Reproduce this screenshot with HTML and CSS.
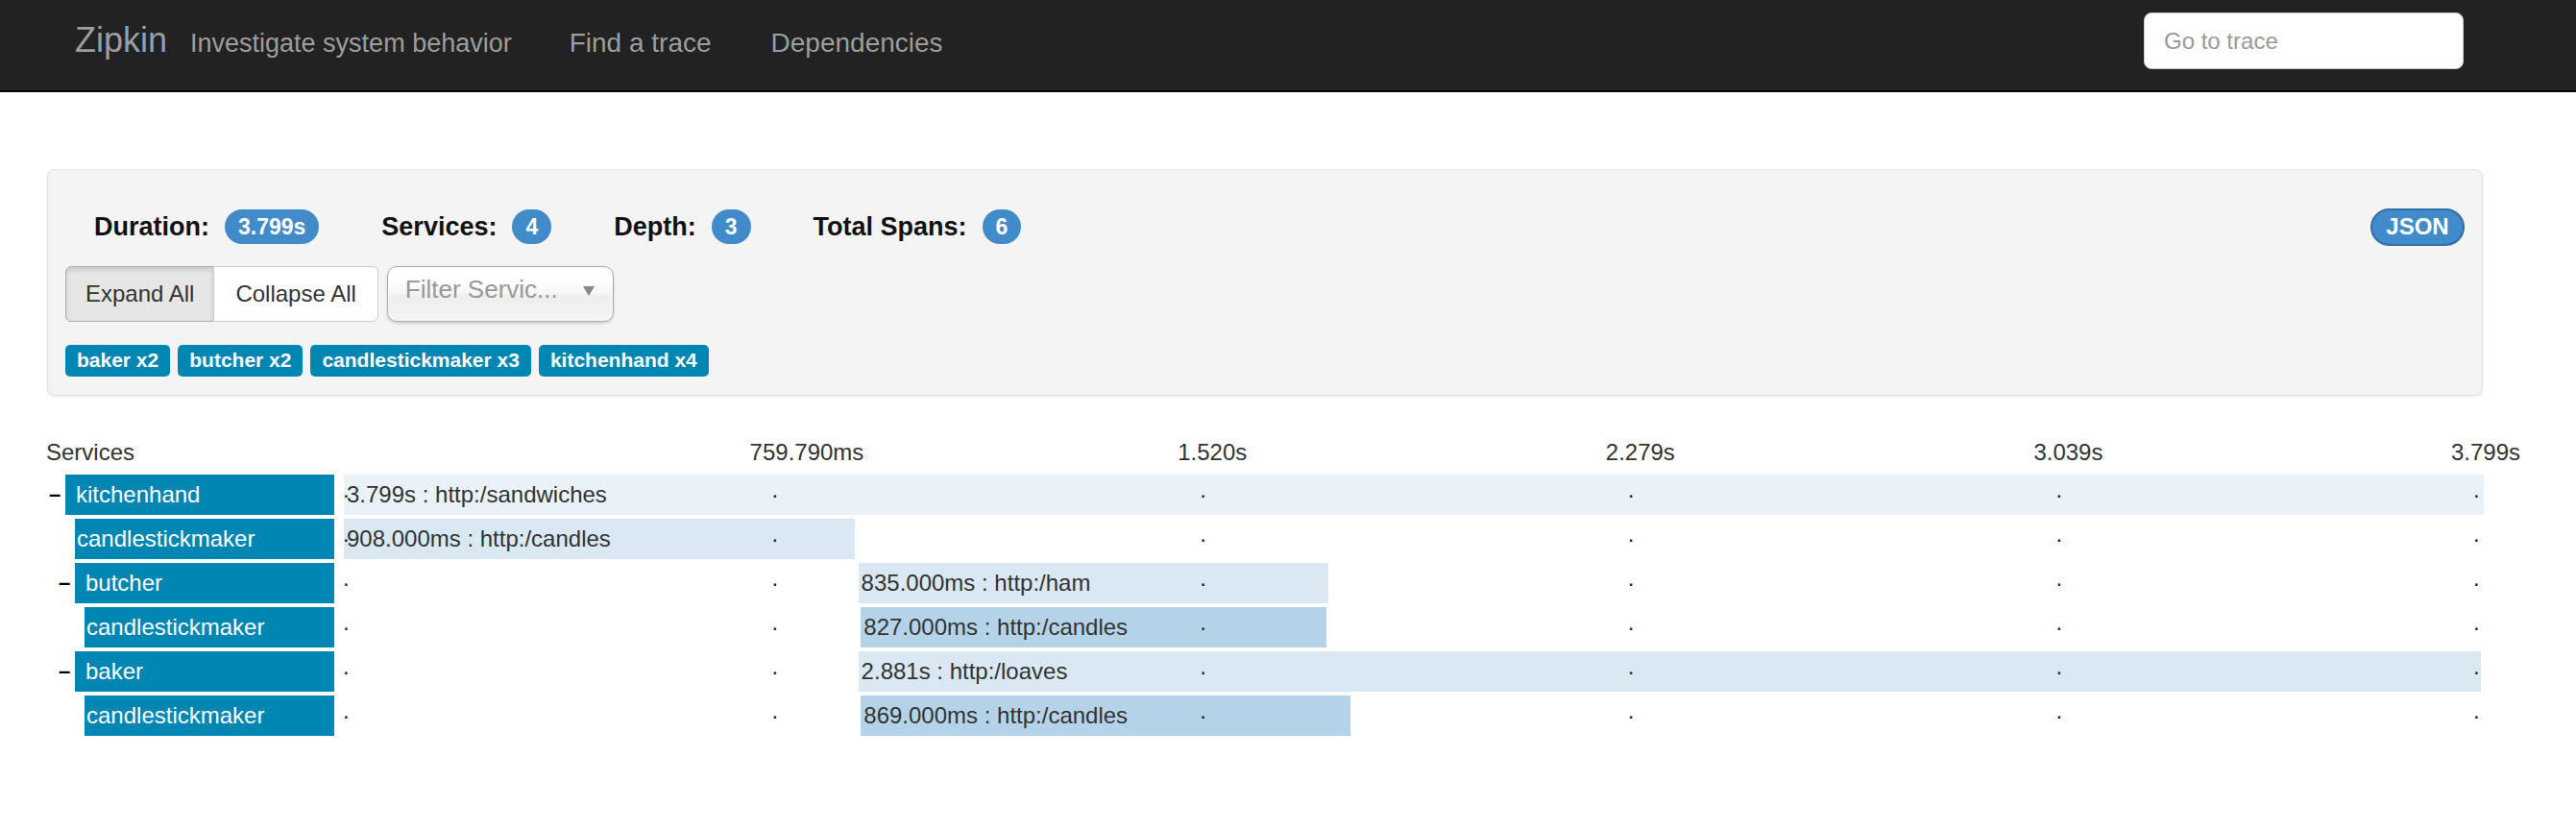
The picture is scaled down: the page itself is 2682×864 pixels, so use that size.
FILE: index.html
```html
<!DOCTYPE html>
<html lang="en">
<head>
<meta charset="utf-8">
<title>Zipkin - Trace</title>
<link rel="stylesheet" href="styles.css">
</head>
<body>
<nav class="navbar">
  <div class="nav-left">
    <a class="brand" href="#">Zipkin</a>
    <span class="tagline">Investigate system behavior</span>
    <ul class="nav-links">
      <li><a href="#">Find a trace</a></li>
      <li><a href="#">Dependencies</a></li>
    </ul>
  </div>
  <input class="trace-input" type="text" placeholder="Go to trace">
</nav>

<main class="content">
  <section class="summary-panel">
    <div class="summary-top">
      <div class="stats">
        <div class="stat"><strong>Duration:</strong><span class="badge">3.799s</span></div>
        <div class="stat"><strong>Services:</strong><span class="badge">4</span></div>
        <div class="stat"><strong>Depth:</strong><span class="badge">3</span></div>
        <div class="stat"><strong>Total Spans:</strong><span class="badge">6</span></div>
      </div>
      <button class="json-btn">JSON</button>
    </div>
    <div class="controls">
      <div class="btn-group">
        <button class="btn active">Expand All</button>
        <button class="btn">Collapse All</button>
      </div>
      <div class="filter-select">
        <span class="filter-text">Filter Servic...</span>
        <span class="caret"></span>
      </div>
    </div>
    <div class="service-tags">
      <span class="tag">baker x2</span>
      <span class="tag">butcher x2</span>
      <span class="tag">candlestickmaker x3</span>
      <span class="tag">kitchenhand x4</span>
    </div>
  </section>

  <section class="trace">
    <div class="trace-header">
      <div class="services-title">Services</div>
      <div class="axis">
        <span class="tick-label l1">759.790ms</span>
        <span class="tick-label l2">1.520s</span>
        <span class="tick-label l3">2.279s</span>
        <span class="tick-label l4">3.039s</span>
        <span class="tick-label l5">3.799s</span>
      </div>
    </div>

    <div class="span-row">
      <div class="svc-cell d1"><span class="expander">–</span><div class="svc-name parent">kitchenhand</div></div>
      <div class="timeline">
        <div class="bar depth1" style="left:0%;width:100%">3.799s : http:/sandwiches</div>
        <span class="dot k0">.</span><span class="dot k1">.</span><span class="dot k2">.</span><span class="dot k3">.</span><span class="dot k4">.</span><span class="dot k5">.</span>
      </div>
    </div>

    <div class="span-row">
      <div class="svc-cell d2-leaf"><div class="svc-name">candlestickmaker</div></div>
      <div class="timeline">
        <div class="bar depth2" style="left:0%;width:23.90%">908.000ms : http:/candles</div>
        <span class="dot k0">.</span><span class="dot k1">.</span><span class="dot k2">.</span><span class="dot k3">.</span><span class="dot k4">.</span><span class="dot k5">.</span>
      </div>
    </div>

    <div class="span-row">
      <div class="svc-cell d2"><span class="expander">–</span><div class="svc-name parent">butcher</div></div>
      <div class="timeline">
        <div class="bar depth2" style="left:24.04%;width:21.98%">835.000ms : http:/ham</div>
        <span class="dot k0">.</span><span class="dot k1">.</span><span class="dot k2">.</span><span class="dot k3">.</span><span class="dot k4">.</span><span class="dot k5">.</span>
      </div>
    </div>

    <div class="span-row">
      <div class="svc-cell d3-leaf"><div class="svc-name">candlestickmaker</div></div>
      <div class="timeline">
        <div class="bar depth3" style="left:24.16%;width:21.77%">827.000ms : http:/candles</div>
        <span class="dot k0">.</span><span class="dot k1">.</span><span class="dot k2">.</span><span class="dot k3">.</span><span class="dot k4">.</span><span class="dot k5">.</span>
      </div>
    </div>

    <div class="span-row">
      <div class="svc-cell d2"><span class="expander">–</span><div class="svc-name parent">baker</div></div>
      <div class="timeline">
        <div class="bar depth2" style="left:24.04%;width:75.84%">2.881s : http:/loaves</div>
        <span class="dot k0">.</span><span class="dot k1">.</span><span class="dot k2">.</span><span class="dot k3">.</span><span class="dot k4">.</span><span class="dot k5">.</span>
      </div>
    </div>

    <div class="span-row">
      <div class="svc-cell d3-leaf"><div class="svc-name">candlestickmaker</div></div>
      <div class="timeline">
        <div class="bar depth3" style="left:24.16%;width:22.87%">869.000ms : http:/candles</div>
        <span class="dot k0">.</span><span class="dot k1">.</span><span class="dot k2">.</span><span class="dot k3">.</span><span class="dot k4">.</span><span class="dot k5">.</span>
      </div>
    </div>
  </section>
</main>
</body>
</html>
```

FILE: styles.css
```css
* {
  box-sizing: border-box;
}

body {
  margin: 0;
  font-family: "Liberation Sans", Arial, sans-serif;
  color: #333;
  background: #fff;
}

/* ---------- navbar ---------- */
.navbar {
  display: flex;
  justify-content: space-between;
  align-items: flex-start;
  height: 96px;
  background: #222;
  border-bottom: 2px solid #080808;
}

.nav-left {
  display: flex;
  align-items: baseline;
  padding: 24px 0 0 78px;
}

.brand {
  font-size: 36px;
  line-height: 36px;
  color: #9d9d9d;
  text-decoration: none;
  margin-right: 24px;
}

.tagline {
  font-size: 27px;
  color: #9d9d9d;
  margin-right: 30px;
}

.nav-links {
  display: flex;
  list-style: none;
  margin: 0;
  padding: 0;
}

.nav-links li {
  padding: 0 30px;
  font-size: 28px;
}

.nav-links li:last-child {
  padding-left: 32px;
}

.nav-links a {
  color: #9d9d9d;
  text-decoration: none;
}

.trace-input {
  margin: 13px 117px 0 0;
  width: 333px;
  height: 59px;
  border: 1px solid #ccc;
  border-radius: 8px;
  padding: 0 20px;
  font-family: "Liberation Sans", Arial, sans-serif;
  font-size: 24px;
  color: #555;
  background: #fff;
}

.trace-input::placeholder {
  color: #999;
}

/* ---------- content ---------- */
.content {
  padding: 80px 96px 40px 48px;
}

.summary-panel {
  margin: 0 1px;
  background: #f4f4f4;
  border: 1px solid #e3e3e3;
  border-radius: 8px;
  padding: 18px 18px 19px;
  box-shadow: 0 1px 3px rgba(0, 0, 0, 0.08);
}

.summary-top {
  display: flex;
  justify-content: space-between;
  align-items: center;
  height: 40px;
  margin-top: 21px;
}

.stats {
  display: flex;
  align-items: center;
  gap: 65px;
  padding-left: 30px;
}

.stat {
  display: flex;
  align-items: center;
  gap: 16px;
  font-size: 27px;
  color: #111;
}

.badge {
  display: inline-block;
  background: #428bca;
  color: #fff;
  font-size: 23px;
  font-weight: bold;
  line-height: 24px;
  padding: 6px 14px;
  border-radius: 18px;
}

.json-btn {
  width: 98px;
  height: 39px;
  padding: 0;
  background: #428bca;
  border: 2px solid #2f6ea8;
  border-radius: 20px;
  color: #fff;
  font-family: "Liberation Sans", Arial, sans-serif;
  font-size: 24px;
  font-weight: bold;
}

.controls {
  display: flex;
  gap: 10px;
  margin-top: 21px;
}

.btn-group {
  display: flex;
}

.btn {
  font-family: "Liberation Sans", Arial, sans-serif;
  font-size: 24px;
  line-height: 36px;
  padding: 10px 20px;
  border: 1px solid #ccc;
  background: #fff;
  color: #333;
}

.btn:first-child {
  border-radius: 6px 0 0 6px;
}

.btn:last-child {
  border-radius: 0 6px 6px 0;
  margin-left: -1px;
  padding: 10px 22px;
}

.btn.active {
  background: #e6e6e6;
  border-color: #adadad;
  box-shadow: inset 0 3px 5px rgba(0, 0, 0, 0.125);
}

.filter-select {
  display: flex;
  align-items: center;
  justify-content: space-between;
  width: 236px;
  height: 58px;
  margin-left: -1px;
  padding: 0 19px 9px 18px;
  border: 1px solid #aaa;
  border-radius: 10px;
  background: linear-gradient(#fff 20%, #f6f6f6 50%, #eee 52%, #f4f4f4 100%);
  box-shadow: 0 2px 3px rgba(0, 0, 0, 0.15), inset 0 0 3px #fff;
  color: #999;
  font-size: 26px;
  white-space: nowrap;
}

.caret {
  width: 0;
  height: 0;
  border-left: 6px solid transparent;
  border-right: 6px solid transparent;
  border-top: 10px solid #888;
  margin-top: 3px;
}

.service-tags {
  display: flex;
  gap: 8px;
  margin-top: 24px;
}

.tag {
  background: #0086b3;
  color: #fff;
  font-size: 21px;
  font-weight: bold;
  line-height: 21px;
  padding: 5px 12px 7px;
  border-radius: 5px;
  white-space: nowrap;
}

/* ---------- trace timeline ---------- */
.trace {
  margin-top: 41px;
}

.trace-header {
  display: grid;
  grid-template-columns: 300px 1fr;
  column-gap: 10px;
  height: 36px;
  line-height: 36px;
  font-size: 24px;
  color: #333;
  margin-bottom: 5px;
}

.axis {
  position: relative;
}

.tick-label {
  position: absolute;
  top: 0;
  white-space: nowrap;
}

.l1 { left: calc(20% - 23px); }
.l2 { left: calc(40% - 23px); }
.l3 { left: calc(60% - 23px); }
.l4 { left: calc(80% - 23px); }
.l5 { left: calc(100% - 34px); }

.span-row {
  display: grid;
  grid-template-columns: 300px 1fr;
  column-gap: 10px;
  height: 42px;
  margin-bottom: 4px;
}

.svc-cell {
  display: flex;
  align-items: center;
}

.svc-cell.d1 { padding-left: 3px; }
.svc-cell.d2 { padding-left: 13px; }
.svc-cell.d2-leaf { padding-left: 30px; }
.svc-cell.d3-leaf { padding-left: 40px; }

.expander {
  width: 17px;
  font-size: 22px;
  font-weight: bold;
  line-height: 1;
  color: #000;
}

.svc-name {
  flex: 1;
  height: 42px;
  background: #0086b3;
  color: #fff;
  font-size: 24px;
  line-height: 42px;
  padding-left: 2px;
  white-space: nowrap;
  overflow: hidden;
}

.svc-name.parent {
  padding-left: 11px;
}

.timeline {
  position: relative;
  height: 42px;
}

.bar {
  position: absolute;
  top: 0;
  bottom: 0;
  padding-left: 3px;
  font-size: 24px;
  line-height: 42px;
  color: #333;
  white-space: nowrap;
}

.bar.depth1 { background: #eaf2f9; }
.bar.depth2 { background: #d9e8f3; }
.bar.depth3 { background: #b4d3e8; }

.dot {
  position: absolute;
  top: 4px;
  font-size: 24px;
  line-height: 24px;
  color: #222;
}

.k0 { left: -1px; }
.k1 { left: 20%; }
.k2 { left: 40%; }
.k3 { left: 60%; }
.k4 { left: 80%; }
.k5 { left: calc(100% - 11px); }
```
